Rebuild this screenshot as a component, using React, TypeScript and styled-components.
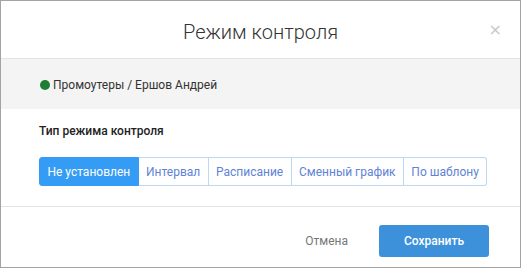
import React from "react";
import styled, { createGlobalStyle } from "styled-components";

const Global = createGlobalStyle`
  html, body { margin: 0; padding: 0; background: #fff; }
  * { box-sizing: border-box; }
`;

const Modal = styled.div`
  width: 521px;
  height: 268px;
  border: 1px solid #a3a3a3;
  background: #fff;
  display: flex;
  flex-direction: column;
  font-family: Roboto, "Liberation Sans", sans-serif;
  color: #333;
`;

const Header = styled.div`
  height: 58px;
  border-bottom: 1px solid #e3e3e3;
  display: grid;
  grid-template-columns: 1fr auto 1fr;
  align-items: center;
  padding-top: 4px;
`;

const Title = styled.h2`
  grid-column: 2;
  margin: 0;
  font-size: 20px;
  font-weight: 300;
  color: #333;
  line-height: 24px;
`;

const Close = styled.button`
  grid-column: 3;
  justify-self: end;
  margin-right: 15px;
  margin-top: -4px;
  border: none;
  background: none;
  padding: 0 3px;
  font-family: "DejaVu Sans", sans-serif;
  font-size: 16px;
  line-height: 16px;
  color: #c8c8c8;
  cursor: pointer;
`;

const Band = styled.div`
  height: 50px;
  background: #f4f4f4;
  display: flex;
  align-items: center;
  gap: 3px;
  padding: 2px 0 0 39px;
  font-size: 12px;
  color: #333;
`;

const Dot = styled.span<{ $color: string }>`
  width: 10px;
  height: 10px;
  border-radius: 50%;
  background: ${(p) => p.$color};
`;

const Body = styled.div`
  height: 97px;
  padding: 14px 38px 0;
`;

const Label = styled.div`
  font-size: 12px;
  font-weight: 500;
  line-height: 16px;
  color: #222;
  margin-bottom: 18px;
`;

const Group = styled.div`
  display: flex;
`;

const Segment = styled.button<{ $active?: boolean }>`
  height: 29px;
  padding: 0 7.4px;
  white-space: nowrap;
  flex: none;
  font-family: Roboto, "Liberation Sans", sans-serif;
  font-size: 12px;
  border: 1px solid ${(p) => (p.$active ? "#359cf5" : "#bcd8f2")};
  border-left-width: 0;
  background: ${(p) => (p.$active ? "#359cf5" : "#fff")};
  color: ${(p) => (p.$active ? "#fff" : "#6183d6")};
  cursor: pointer;
  &:first-child {
    border-left-width: 1px;
    border-radius: 3px 0 0 3px;
  }
  &:last-child {
    border-radius: 0 3px 3px 0;
  }
`;

const Footer = styled.div`
  border-top: 1px solid #e3e3e3;
  flex: 1;
  display: flex;
  justify-content: flex-end;
  align-items: flex-start;
  gap: 15px;
  padding: 18px 31px 0 0;
`;

const CancelButton = styled.button`
  height: 32px;
  padding: 0 16px;
  border: none;
  background: none;
  font-family: Roboto, "Liberation Sans", sans-serif;
  font-size: 12px;
  color: #777;
  cursor: pointer;
`;

const SaveButton = styled.button`
  width: 110px;
  height: 32px;
  border: none;
  border-radius: 3px;
  background: #3c91da;
  color: #fff;
  font-family: Roboto, "Liberation Sans", sans-serif;
  font-size: 12px;
  font-weight: 500;
  cursor: pointer;
`;

const modes = ["Не установлен", "Интервал", "Расписание", "Сменный график", "По шаблону"];

export default function App() {
  return (
    <>
      <Global />
      <Modal>
        <Header>
          <Title>Режим контроля</Title>
          <Close>×</Close>
        </Header>
        <Band>
          <Dot $color="#1e7e34" />
          <span>Промоутеры / Ершов Андрей</span>
        </Band>
        <Body>
          <Label>Тип режима контроля</Label>
          <Group>
            {modes.map((m, i) => (
              <Segment key={m} $active={i === 0}>
                {m}
              </Segment>
            ))}
          </Group>
        </Body>
        <Footer>
          <CancelButton>Отмена</CancelButton>
          <SaveButton>Сохранить</SaveButton>
        </Footer>
      </Modal>
    </>
  );
}
